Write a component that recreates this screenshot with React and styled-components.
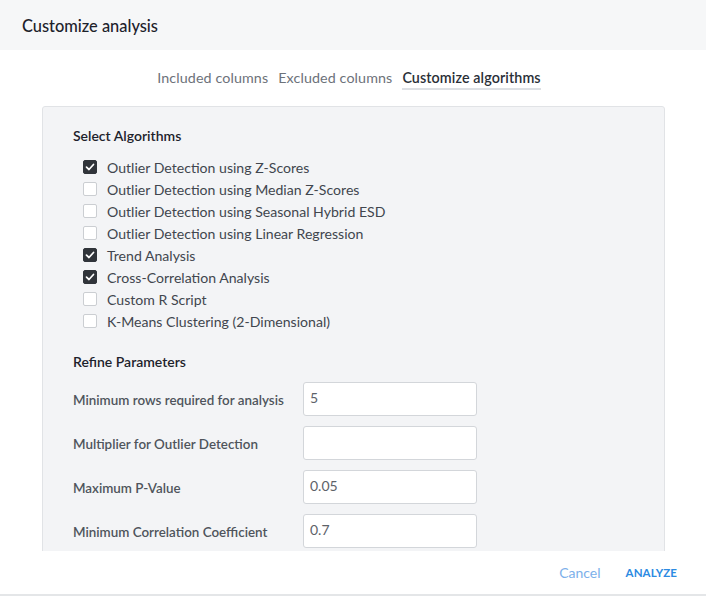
import React from "react";
import styled, { createGlobalStyle } from "styled-components";

const Global = createGlobalStyle`
  html, body { margin: 0; padding: 0; background: #fff; }
  body { font-family: Lato, "Open Sans", sans-serif; -webkit-font-smoothing: antialiased; }
  * { box-sizing: border-box; }
`;

const Dialog = styled.div`
  width: 706px;
  height: 596px;
  display: flex;
  flex-direction: column;
  background: #fff;
  overflow: hidden;
`;

const Header = styled.div`
  height: 50px;
  flex: none;
  background: #f6f7f8;
  display: flex;
  align-items: center;
  padding: 0 22px;
`;

const Title = styled.h1`
  margin: 0;
  font-size: 16.4px;
  font-weight: 500;
  color: #1d222b;
`;

const Tabs = styled.div`
  flex: none;
  display: flex;
  justify-content: center;
  gap: 10px;
  padding: 19px 8px 0 0;
  height: 56px;
`;

const Tab = styled.div`
  font-size: 14.3px;
  color: ${(p) => (p.$active ? "#2a2f37" : "#6d727a")};
  font-weight: ${(p) => (p.$active ? 600 : 400)};
  height: 21px;
  border-bottom: 2px solid ${(p) => (p.$active ? "#dde0e4" : "transparent")};
  letter-spacing: 0.1px;
`;

const Scroll = styled.div`
  flex: 1;
  overflow: hidden;
  padding: 0 41px 0 42px;
`;

const Panel = styled.div`
  background: #f3f4f6;
  border: 1px solid #e1e3e6;
  border-radius: 3px;
  padding: 20px 30px 30px;
`;

const SectionTitle = styled.div`
  font-size: 14px;
  font-weight: 600;
  color: #1d222b;
  margin-bottom: 12px;
`;

const CheckList = styled.div`
  display: flex;
  flex-direction: column;
  padding-left: 10px;
  margin-bottom: 21px;
`;

const CheckRow = styled.label`
  display: flex;
  align-items: center;
  height: 22px;
  gap: 10px;
  font-size: 14.1px;
  color: #41464e;
`;

const Box = styled.span`
  width: 14px;
  height: 14px;
  border-radius: 2px;
  flex: none;
  display: flex;
  align-items: center;
  justify-content: center;
  background: ${(p) => (p.$checked ? "#30343a" : "#fff")};
  border: 1px solid ${(p) => (p.$checked ? "#30343a" : "#cbced2")};
`;

const ParamList = styled.div`
  display: flex;
  flex-direction: column;
  gap: 10px;
  margin-top: 5px;
`;

const ParamRow = styled.div`
  display: grid;
  grid-template-columns: 230px 174px;
  align-items: center;
  height: 34px;
`;

const ParamLabel = styled.div`
  font-size: 13.4px;
  font-weight: 600;
  color: #4f545c;
  padding-top: 2px;
`;

const Input = styled.div`
  height: 34px;
  background: #fff;
  border: 1px solid #d3d6da;
  border-radius: 3px;
  padding: 6px 6px;
  font-size: 14px;
  color: #5d6269;
`;

const Footer = styled.div`
  height: 45px;
  flex: none;
  display: flex;
  align-items: center;
  justify-content: flex-end;
  gap: 25px;
  padding: 0 29px 0 0;
  border-bottom: 2px solid #e4e6e8;
`;

const CancelBtn = styled.button`
  background: none;
  border: 0;
  padding: 0;
  font-family: inherit;
  font-size: 14px;
  color: #7cb0ea;
`;

const PrimaryBtn = styled.button`
  background: none;
  border: 0;
  padding: 0;
  font-family: inherit;
  font-size: 11.5px;
  font-weight: 700;
  letter-spacing: 0.1px;
  color: #2c8ae2;
`;

const Check = () => (
  <svg width="10" height="8" viewBox="0 0 10 8">
    <path d="M1.5 4.2 L4 6.5 L8.5 1.5" fill="none" stroke="#fff" strokeWidth="1.7" strokeLinecap="round" strokeLinejoin="round" />
  </svg>
);

const algorithms = [
  ["Outlier Detection using Z-Scores", true],
  ["Outlier Detection using Median Z-Scores", false],
  ["Outlier Detection using Seasonal Hybrid ESD", false],
  ["Outlier Detection using Linear Regression", false],
  ["Trend Analysis", true],
  ["Cross-Correlation Analysis", true],
  ["Custom R Script", false],
  ["K-Means Clustering (2-Dimensional)", false],
];

const params = [
  ["Minimum rows required for analysis", "5"],
  ["Multiplier for Outlier Detection", ""],
  ["Maximum P-Value", "0.05"],
  ["Minimum Correlation Coefficient", "0.7"],
];

export default function App() {
  return (
    <>
      <Global />
      <Dialog>
        <Header>
          <Title>Customize analysis</Title>
        </Header>
        <Tabs>
          <Tab>Included columns</Tab>
          <Tab>Excluded columns</Tab>
          <Tab $active>Customize algorithms</Tab>
        </Tabs>
        <Scroll>
          <Panel>
            <SectionTitle>Select Algorithms</SectionTitle>
            <CheckList>
              {algorithms.map(([name, checked]) => (
                <CheckRow key={name}>
                  <Box $checked={checked}>{checked && <Check />}</Box>
                  {name}
                </CheckRow>
              ))}
            </CheckList>
            <SectionTitle>Refine Parameters</SectionTitle>
            <ParamList>
              {params.map(([label, value]) => (
                <ParamRow key={label}>
                  <ParamLabel>{label}</ParamLabel>
                  <Input>{value}</Input>
                </ParamRow>
              ))}
            </ParamList>
          </Panel>
        </Scroll>
        <Footer>
          <CancelBtn>Cancel</CancelBtn>
          <PrimaryBtn>ANALYZE</PrimaryBtn>
        </Footer>
      </Dialog>
    </>
  );
}
